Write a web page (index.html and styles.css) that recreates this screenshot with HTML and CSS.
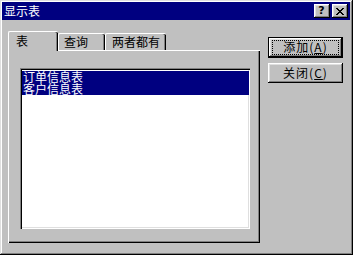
FILE: index.html
```html
<!DOCTYPE html>
<html lang="zh-CN">
<head>
<meta charset="utf-8">
<title>显示表</title>
<link rel="stylesheet" href="styles.css">
</head>
<body>
<div class="window">
  <div class="titlebar">
    <span class="title">显示表</span>
    <div class="caps">
      <span class="cap help">?</span>
      <span class="cap close">
        <svg width="8" height="7" viewBox="0 0 8 7" shape-rendering="crispEdges"><path d="M0 0h2v1h-2zM6 0h2v1h-2zM1 1h2v1h-2zM5 1h2v1h-2zM2 2h4v1h-4zM3 3h2v1h-2zM2 4h4v1h-4zM1 5h2v1h-2zM5 5h2v1h-2zM0 6h2v1h-2zM6 6h2v1h-2z" fill="#000"/></svg>
      </span>
    </div>
  </div>
  <div class="body">
    <div class="left">
      <div class="tabs">
        <div class="tab active t1">表</div>
        <div class="tab t2">查询</div>
        <div class="tab t3">两者都有</div>
      </div>
      <div class="panel">
        <div class="list">
          <div class="item sel">订单信息表</div>
          <div class="item sel">客户信息表</div>
        </div>
      </div>
    </div>
    <div class="buttons">
      <div class="btn default"><span class="focus">添加(<u>A</u>)</span></div>
      <div class="btn">关闭(<u>C</u>)</div>
    </div>
  </div>
</div>
</body>
</html>
```
FILE: styles.css
```css
* { box-sizing: border-box; }
html, body { margin: 0; padding: 0; background: #c0c0c0; }
body {
  font-family: "Noto Sans CJK SC", "Liberation Sans", sans-serif;
  font-size: 12px;
  color: #000;
}
.window {
  width: 353px;
  height: 255px;
  background: #c0c0c0;
  padding: 2px;
  box-shadow: inset -1px -1px #000, inset 1px 1px #dfdfdf, inset -2px -2px #808080, inset 2px 2px #fff;
}
.titlebar {
  height: 18px;
  background: #000080;
  display: flex;
  align-items: center;
  justify-content: space-between;
  margin-right: 1px;
}
.title {
  color: #fff;
  font-size: 12px;
  line-height: 18px;
  padding-left: 2px;
}
.caps {
  display: flex;
  gap: 2px;
  margin-right: 2px;
}
.cap {
  width: 16px;
  height: 14px;
  background: #c0c0c0;
  box-shadow: inset -1px -1px #000, inset 1px 1px #fff, inset -2px -2px #808080, inset 2px 2px #dfdfdf;
  display: flex;
  align-items: center;
  justify-content: center;
}
.help {
  font-family: "DejaVu Sans", sans-serif;
  font-weight: bold;
  font-size: 11px;
  line-height: 14px;
  padding-right: 1px;
}
.close svg { display: block; margin-left: -1px; }
.body {
  display: flex;
  padding: 11px 0 0 6px;
}
.left { width: 252px; }
.tabs {
  display: flex;
  align-items: flex-end;
  height: 19px;
  position: relative;
  z-index: 1;
}
.tab {
  height: 17px;
  line-height: 16px;
  border-top: 1px solid #fff;
  border-left: 1px solid #fff;
  border-top-left-radius: 2px;
  border-top-right-radius: 2px;
  box-shadow: inset -1px 0 #000, inset -2px 0 #808080;
  background: #c0c0c0;
}
.t1 { width: 50px; padding-left: 7px; }
.t2 { width: 47px; padding-left: 5px; }
.t3 { width: 61px; padding-left: 6px; }
.tab.active {
  height: 20px;
  margin-bottom: -1px;
  line-height: 17px;
}
.panel {
  width: 252px;
  height: 193px;
  border-top: 1px solid #fff;
  border-left: 1px solid #fff;
  box-shadow: inset -1px -1px #000, inset -2px -2px #808080;
  padding: 17px 0 0 11px;
}
.list {
  width: 230px;
  height: 161px;
  background: #fff;
  box-shadow: inset 1px 1px #808080, inset 2px 2px #000, inset -1px -1px #fff, inset -2px -2px #dfdfdf;
  padding: 3px 1px 2px 2px;
}
.item {
  height: 12px;
  line-height: 12px;
  padding-left: 1px;
  white-space: nowrap;
}
.item.sel { background: #000080; color: #fff; }
.buttons {
  margin-left: 8px;
  padding-top: 6px;
  display: flex;
  flex-direction: column;
  gap: 5px;
}
.btn {
  width: 75px;
  height: 20px;
  background: #c0c0c0;
  box-shadow: inset -1px -1px #000, inset 1px 1px #fff, inset -2px -2px #808080, inset 2px 2px #dfdfdf;
  display: flex;
  align-items: center;
  justify-content: center;
  line-height: 14px;
  letter-spacing: 1px;
}
.btn.default {
  height: 21px;
  border: 1px solid #000;
}
.focus {
  display: block;
  width: 67px;
  height: 15px;
  line-height: 14px;
  text-align: center;
  outline: 1px dotted #000;
  outline-offset: -1px;
}
u { text-decoration: underline; }
```
